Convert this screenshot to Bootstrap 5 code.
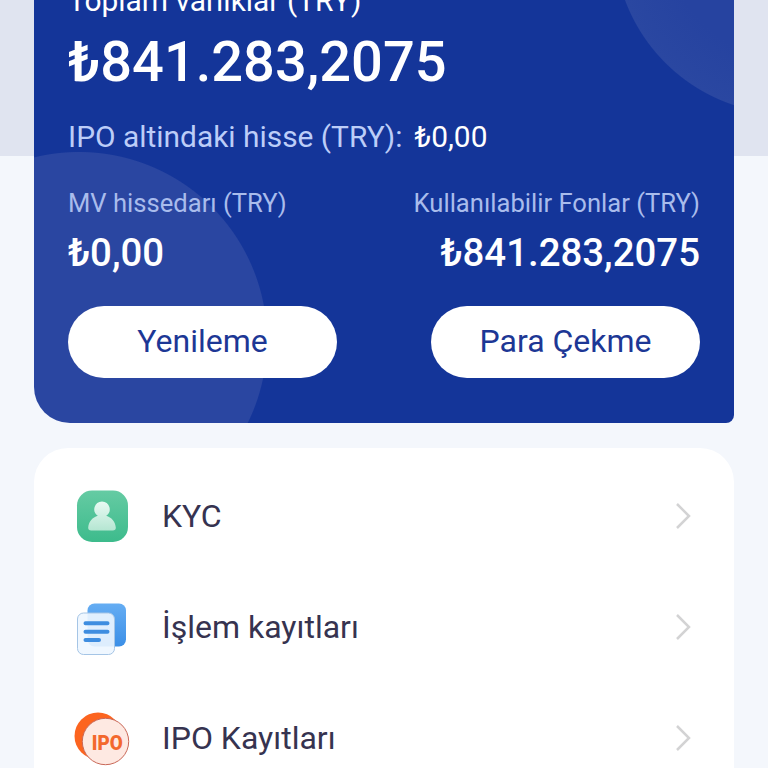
<!DOCTYPE html>
<html lang="tr">
<head>
<meta charset="utf-8">
<meta name="viewport" content="width=device-width, initial-scale=1">
<title>Varlıklar</title>
<link href="https://cdn.jsdelivr.net/npm/bootstrap@5.3.0/dist/css/bootstrap.min.css" rel="stylesheet">
<style>
body{font-family:Roboto,"Liberation Sans",sans-serif;color:#363350}
.screen{height:768px;background:linear-gradient(#e0e4f0 156px,#f4f7fc 156px);padding:0 34px}
.asset-panel{height:482.5px;margin-top:-60px;padding:41px 34px 0;border-radius:0 0 8px 36px;
 background:radial-gradient(circle at 45px 400px,#2a46a1 187.5px,transparent 188.5px),
 radial-gradient(circle at 755px -1px,#2643a0 0,#2643a0 120px,#2a47a1 174.5px,transparent 175.5px),#143599}
.asset-title{font-size:29.9px;line-height:40px}
.asset-total{font-size:56px;line-height:66px;font-weight:500;margin-top:8px}
.asset-ipo{font-size:29.9px;line-height:40px;margin-top:22px}
.soft{color:#bccdf8}
.asset-cols{margin-top:30px}
.asset-label{font-size:25.6px;line-height:32px;color:#a9bcec}
.asset-num{font-size:38.4px;line-height:48px;font-weight:500;margin-top:10px}
.asset-actions{margin-top:28.5px}
.pill-btn,.pill-btn:hover{width:269px;height:72px;background:#fff;color:#1d3795;font-size:32px;line-height:40px;border:0;padding:0 0 2px}
.menu-panel{margin-top:25.5px;border-radius:34px 34px 0 0;padding:12.5px 42px 0 38px;height:340px}
.menu-row{height:111px;font-size:32px;color:#363350;text-decoration:none}
.menu-name{margin-left:30px}
</style>
<script src="https://cdn.jsdelivr.net/npm/bootstrap@5.3.0/dist/js/bootstrap.bundle.min.js"></script>
</head>
<body>
<main class="screen overflow-hidden d-flex flex-column">
 <section class="asset-panel text-white flex-shrink-0">
  <div class="asset-title">Toplam varlıklar (TRY)</div>
  <div class="asset-total">₺841.283,2075</div>
  <div class="asset-ipo d-flex gap-2"><span class="soft">IPO altindaki hisse (TRY):</span><span class="ms-1">₺0,00</span></div>
  <div class="asset-cols d-flex justify-content-between">
   <div><div class="asset-label">MV hissedarı (TRY)</div><div class="asset-num">₺0,00</div></div>
   <div class="text-end"><div class="asset-label">Kullanılabilir Fonlar (TRY)</div><div class="asset-num">₺841.283,2075</div></div>
  </div>
  <div class="asset-actions d-flex justify-content-between">
   <button class="btn pill-btn rounded-pill">Yenileme</button>
   <button class="btn pill-btn rounded-pill">Para Çekme</button>
  </div>
 </section>
 <nav class="menu-panel bg-white flex-shrink-0">
  <a href="#" class="menu-row d-flex align-items-center">
   <svg width="60" height="60" viewBox="0 0 60 60"><defs><linearGradient id="g" x2="0" y2="1"><stop stop-color="#65cba3"/><stop offset="1" stop-color="#3dbb8c"/></linearGradient><linearGradient id="p" x2="0" y2="1"><stop stop-color="#e9faf3"/><stop offset="1" stop-color="#b5e6d2"/></linearGradient></defs>
    <rect x="5" y="4.500" width="51" height="51.500" rx="15" fill="url(#g)"/>
    <path d="M30 15.500a7.800 7.800 0 0 1 4.200 14.300c5.300 1.700 9 5.700 9.600 11.600q.2 3-3 3H19.200q-3.200 0-3-3c.6-5.900 4.300-9.900 9.600-11.600A7.800 7.800 0 0 1 30 15.500Z" fill="url(#p)"/></svg>
   <span class="menu-name">KYC</span>
   <svg class="ms-auto" width="20" height="32" viewBox="0 0 20 32" fill="none" stroke="#d3d3d4" stroke-width="2.500"><path d="m5 4 12 12L5 28"/></svg>
  </a>
  <a href="#" class="menu-row d-flex align-items-center">
   <svg width="60" height="60" viewBox="0 0 60 60"><defs><linearGradient id="b" x2="0" y2="1"><stop stop-color="#65adf3"/><stop offset="1" stop-color="#3b8fe7"/></linearGradient></defs>
    <rect x="15.500" y="6.500" width="38.500" height="43" rx="7" fill="url(#b)"/>
    <rect x="5.500" y="16" width="37" height="41.500" rx="6" fill="#edf6ff" fill-opacity=".91" stroke="#a5c5e6"/>
    <path d="M13.500 26.300h22M13.500 34.700h22M13.500 43.100h13.500" stroke="#3e8de0" stroke-width="4" stroke-linecap="round"/></svg>
   <span class="menu-name">İşlem kayıtları</span>
   <svg class="ms-auto" width="20" height="32" viewBox="0 0 20 32" fill="none" stroke="#d3d3d4" stroke-width="2.500"><path d="m5 4 12 12L5 28"/></svg>
  </a>
  <a href="#" class="menu-row d-flex align-items-center">
   <svg width="60" height="60" viewBox="0 0 60 60">
    <circle cx="26" cy="28" r="23.500" fill="#fc641f"/>
    <circle cx="33.500" cy="33.500" r="23.200" fill="#fee9e2" stroke="#c96858"/>
    <text x="35.200" y="42" text-anchor="middle" font-family="Roboto" font-weight="900" font-size="19.500" fill="#f3682d" textLength="31" lengthAdjust="spacingAndGlyphs">IPO</text></svg>
   <span class="menu-name">IPO Kayıtları</span>
   <svg class="ms-auto" width="20" height="32" viewBox="0 0 20 32" fill="none" stroke="#d3d3d4" stroke-width="2.500"><path d="m5 4 12 12L5 28"/></svg>
  </a>
 </nav>
</main>
</body>
</html>
